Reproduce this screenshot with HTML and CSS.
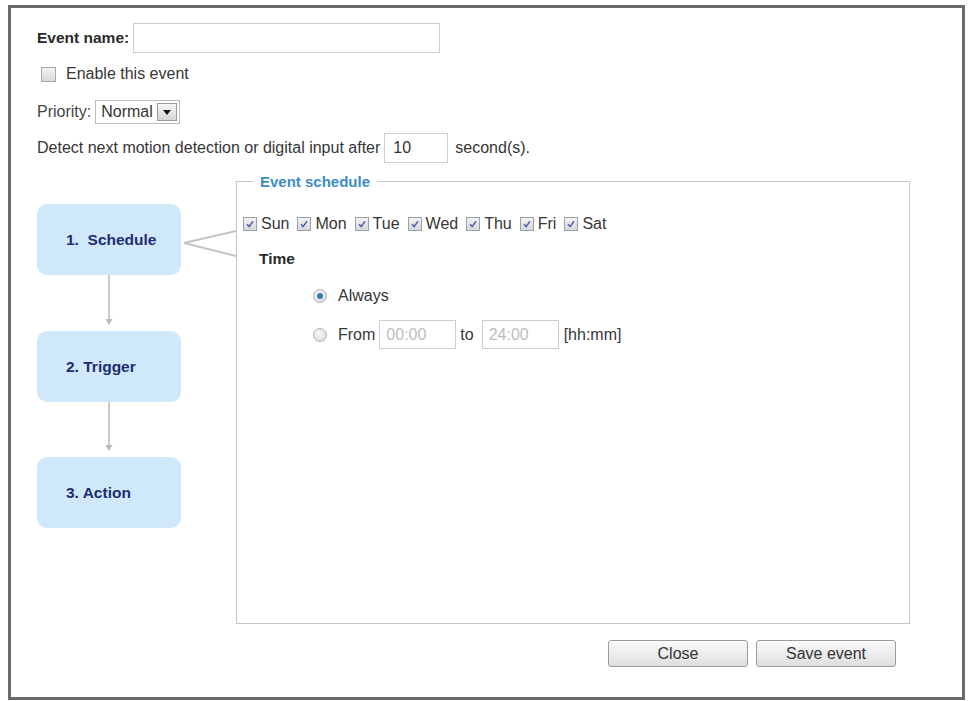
FILE: index.html
```html
<!DOCTYPE html>
<html lang="en">
<head>
    <meta charset="UTF-8">
    <title>Event settings</title>
    <link rel="stylesheet" href="styles.css">
</head>
<body>
    <div class="frame">
        <div class="row name-row">
            <label class="bold">Event name:</label>
            <input class="text name" type="text">
        </div>

        <div class="row check-row">
            <span class="cb"></span>
            <span class="check-label">Enable this event</span>
        </div>

        <div class="row prio-row">
            <span class="prio-label">Priority:</span>
            <span class="select">
                <span class="select-value">Normal</span>
                <span class="drop"><svg width="8" height="5" viewBox="0 0 8 5"><path d="M0 0 L8 0 L4 5 Z" fill="#111"/></svg></span>
            </span>
        </div>

        <div class="row detect-row">
            Detect next motion detection or digital input after
            <input class="text short" type="text" value="10">
            <span class="unit">second(s).</span>
        </div>

        <div class="main">
            <div class="flow">
                <div class="step">1.&nbsp; Schedule</div>
                <div class="arrow">
                    <svg width="144" height="56" viewBox="0 0 144 56">
                        <line x1="72" y1="0" x2="72" y2="47" stroke="#b8b8b8" stroke-width="1.5"/>
                        <path d="M68.5 44 L72 50 L75.5 44 Z" fill="#b8b8b8"/>
                    </svg>
                </div>
                <div class="step">2. Trigger</div>
                <div class="arrow">
                    <svg width="144" height="55" viewBox="0 0 144 55">
                        <line x1="72" y1="0" x2="72" y2="46" stroke="#b8b8b8" stroke-width="1.5"/>
                        <path d="M68.5 43 L72 49 L75.5 43 Z" fill="#b8b8b8"/>
                    </svg>
                </div>
                <div class="step">3. Action</div>
            </div>

            <svg class="link" width="55" height="120" viewBox="0 0 55 120">
                <polyline points="55,58 3,70 55,83" fill="none" stroke="#c4c4c4" stroke-width="2"/>
            </svg>

            <fieldset class="sched">
                <legend>Event schedule</legend>

                <div class="days">
                    <span class="day"><span class="cb on"><svg viewBox="0 0 14 14"><path d="M3.5 7.2 L6 10 L10.5 3.8" fill="none" stroke="#4d5cb0" stroke-width="1.7"/></svg></span>Sun</span>
                    <span class="day"><span class="cb on"><svg viewBox="0 0 14 14"><path d="M3.5 7.2 L6 10 L10.5 3.8" fill="none" stroke="#4d5cb0" stroke-width="1.7"/></svg></span>Mon</span>
                    <span class="day"><span class="cb on"><svg viewBox="0 0 14 14"><path d="M3.5 7.2 L6 10 L10.5 3.8" fill="none" stroke="#4d5cb0" stroke-width="1.7"/></svg></span>Tue</span>
                    <span class="day"><span class="cb on"><svg viewBox="0 0 14 14"><path d="M3.5 7.2 L6 10 L10.5 3.8" fill="none" stroke="#4d5cb0" stroke-width="1.7"/></svg></span>Wed</span>
                    <span class="day"><span class="cb on"><svg viewBox="0 0 14 14"><path d="M3.5 7.2 L6 10 L10.5 3.8" fill="none" stroke="#4d5cb0" stroke-width="1.7"/></svg></span>Thu</span>
                    <span class="day"><span class="cb on"><svg viewBox="0 0 14 14"><path d="M3.5 7.2 L6 10 L10.5 3.8" fill="none" stroke="#4d5cb0" stroke-width="1.7"/></svg></span>Fri</span>
                    <span class="day"><span class="cb on"><svg viewBox="0 0 14 14"><path d="M3.5 7.2 L6 10 L10.5 3.8" fill="none" stroke="#4d5cb0" stroke-width="1.7"/></svg></span>Sat</span>
                </div>

                <div class="time-title bold">Time</div>

                <div class="opt opt-always">
                    <span class="radio on"></span>
                    <span class="opt-label">Always</span>
                </div>
                <div class="opt opt-from">
                    <span class="radio"></span>
                    <span class="opt-label">From</span>
                    <input class="text time-input" type="text" value="00:00" disabled>
                    <span class="to">to</span>
                    <input class="text time-input" type="text" value="24:00" disabled>
                    <span class="fmt">[hh:mm]</span>
                </div>
            </fieldset>
        </div>

        <div class="buttons">
            <button class="btn">Close</button>
            <button class="btn">Save event</button>
        </div>
    </div>
</body>
</html>
```

FILE: styles.css
```css
body {
    margin: 0;
    font-family: "Liberation Sans", Arial, sans-serif;
    font-size: 16px;
    color: #363636;
    background: #fff;
}
.frame {
    box-sizing: border-box;
    width: 957px;
    height: 695px;
    margin: 5px 0 0 8px;
    padding-left: 26px;
    border: 3px solid #6a6a6a;
}
.bold {
    font-weight: bold;
    font-size: 15.5px;
    color: #2a2a2a;
}
.row {
    display: flex;
    align-items: center;
}
.text {
    box-sizing: border-box;
    height: 30px;
    border: 1px solid #cdcdcd;
    padding: 0 8px;
    font: inherit;
    color: #333;
    background: #fff;
}
.name-row {
    margin-top: 15px;
    height: 30px;
}
.name {
    width: 307px;
    margin-left: 4px;
}
.check-row {
    margin-top: 11px;
    height: 20px;
    padding-left: 4px;
}
.cb {
    box-sizing: border-box;
    display: inline-block;
    width: 15px;
    height: 15px;
    border: 1px solid #a9a9a9;
    background: linear-gradient(#f2f2f2, #d9d9d9);
    flex: none;
}
.cb svg {
    display: block;
    width: 100%;
    height: 100%;
}
.check-label {
    margin-left: 10px;
}
.prio-row {
    margin-top: 16px;
    height: 24px;
}
.prio-label {
    color: #444;
}
.select {
    box-sizing: border-box;
    display: flex;
    align-items: center;
    height: 24px;
    width: 85px;
    margin-left: 4px;
    border: 1px solid #bdbdbd;
    padding: 0 2px 0 5px;
}
.select-value {
    flex: 1;
}
.drop {
    box-sizing: border-box;
    display: flex;
    align-items: center;
    justify-content: center;
    width: 20px;
    height: 18px;
    border: 1px solid #999;
    background: linear-gradient(#f7f7f7, #d5d5d5);
}
.detect-row {
    margin-top: 9px;
    height: 30px;
}
.short {
    width: 64px;
    margin-left: 4px;
}
.unit {
    margin-left: 7px;
}
.main {
    display: flex;
    margin-top: 10px;
}
.flow {
    width: 144px;
    padding-top: 31px;
    flex: none;
}
.step {
    height: 71px;
    border-radius: 10px;
    background: #cfe9fb;
    display: flex;
    align-items: center;
    padding-left: 29px;
    font-size: 15.5px;
    font-weight: bold;
    color: #1f2c70;
}
.arrow svg {
    display: block;
}
.link {
    flex: none;
    display: block;
}
.sched {
    box-sizing: border-box;
    width: 674px;
    height: 451px;
    margin: 0;
    padding: 0 0 0 6px;
    border: 1px solid #c6c6c6;
}
.sched legend {
    margin-left: 10px;
    padding: 0 7px;
    font-size: 15px;
    font-weight: bold;
    color: #3d8dc5;
}
.days {
    display: flex;
    align-items: center;
    margin-top: 24px;
    height: 20px;
}
.day {
    display: flex;
    align-items: center;
    margin-right: 8px;
}
.day .cb {
    width: 14px;
    height: 14px;
    margin-right: 4px;
    border-color: #9aa0aa;
}
.time-title {
    margin: 16px 0 0 16px;
}
.opt {
    display: flex;
    align-items: center;
    margin-left: 70px;
}
.opt-always {
    margin-top: 18px;
    height: 20px;
}
.opt-from {
    margin-top: 14px;
    height: 29px;
}
.radio {
    box-sizing: border-box;
    position: relative;
    width: 14px;
    height: 14px;
    border-radius: 50%;
    border: 1px solid #b3b3b3;
    background: radial-gradient(circle at 40% 35%, #fafafa, #d4d4d4);
    flex: none;
}
.radio.on::after {
    content: "";
    position: absolute;
    left: 3px;
    top: 3px;
    width: 6px;
    height: 6px;
    border-radius: 50%;
    background: #2f7fa5;
}
.opt-label {
    margin-left: 11px;
}
.time-input {
    width: 77px;
    height: 29px;
    margin-left: 4px;
    color: #bdbdbd;
    padding: 0 6px;
}
.to {
    margin: 0 4px;
}
.fmt {
    margin-left: 5px;
}
.buttons {
    display: flex;
    justify-content: flex-end;
    gap: 8px;
    margin-top: 16px;
    padding-right: 66px;
}
.btn {
    width: 140px;
    height: 27px;
    border: 1px solid #9c9c9c;
    border-radius: 3px;
    background: linear-gradient(#fbfbfb, #dedede);
    font: inherit;
    color: #333;
    padding: 0;
}
```
